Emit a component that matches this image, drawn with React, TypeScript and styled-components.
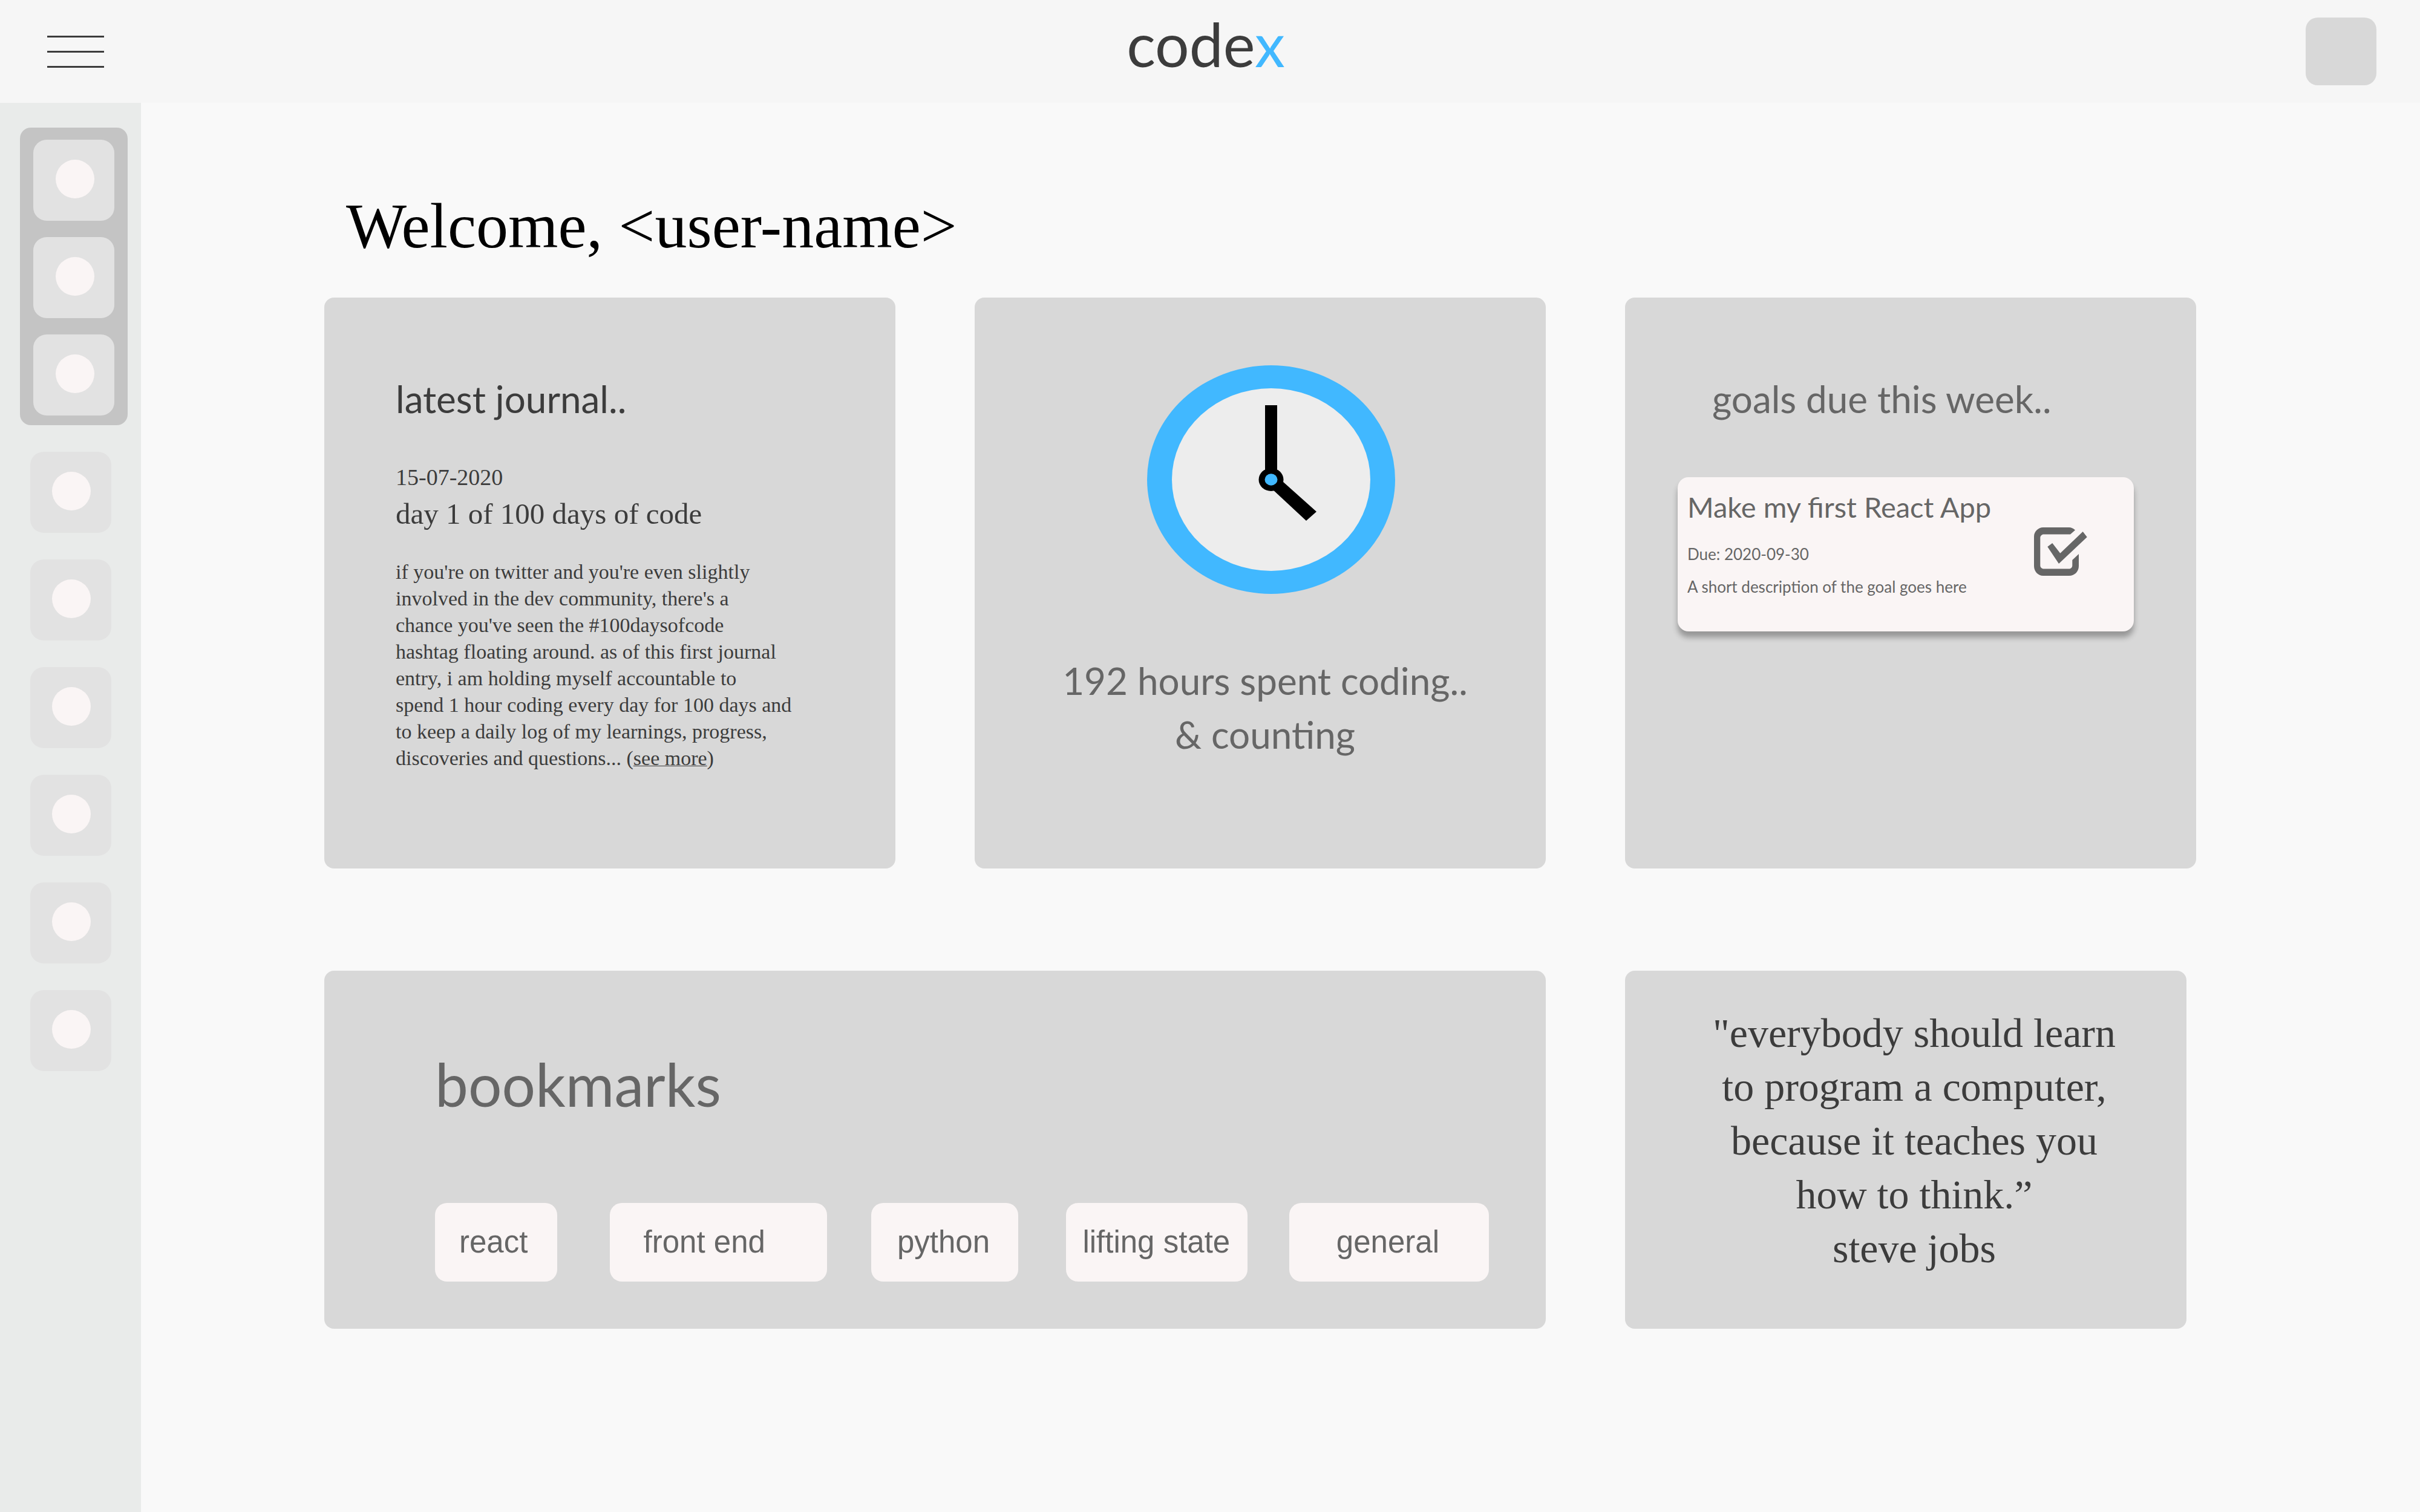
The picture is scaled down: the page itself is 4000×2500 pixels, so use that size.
import React from "react";
import styled, { createGlobalStyle } from "styled-components";

const sans = `Lato, "Open Sans", sans-serif`;
const serif = `"Liberation Serif", "Times New Roman", serif`;
const plain = `"Liberation Sans", Arial, sans-serif`;

const color = {
  page: "#f9f9f9",
  header: "#f6f6f6",
  sidebar: "#e9ebea",
  group: "#c4c4c4",
  tile: "#e2e2e2",
  blush: "#faf5f5",
  card: "#d8d8d8",
  ink: "#3c3c3c",
  muted: "#666666",
  accent: "#41b8ff",
};

const GlobalStyle = createGlobalStyle`
  *, *::before, *::after { box-sizing: border-box; }
  body { margin: 0; background: ${color.page}; color: ${color.ink}; font-family: ${sans}; }
  h1, h2, h3, p, ul, blockquote { margin: 0; padding: 0; font-weight: 400; }
  button { border: 0; padding: 0; background: none; font: inherit; color: inherit; cursor: pointer; }
`;

const Page = styled.div`
  display: flex;
  flex-direction: column;
  min-height: 100vh;
`;

const Header = styled.header`
  display: grid;
  grid-template-columns: 1fr auto 1fr;
  align-items: center;
  min-height: 170px;
  padding: 0 72px 0 58px;
  background: ${color.header};
`;

const MenuButton = styled.button`
  display: flex;
  flex-direction: column;
  gap: 22px;
  justify-self: start;
  padding: 20px;
`;

const MenuLine = styled.span`
  width: 94px;
  height: 3px;
  background: ${color.ink};
`;

const Logo = styled.a`
  align-self: start;
  font-size: 100px;
  line-height: 144px;
  color: ${color.ink};
  text-decoration: none;
`;

const LogoAccent = styled.span`
  color: ${color.accent};
`;

const Avatar = styled.button`
  justify-self: end;
  width: 117px;
  height: 112px;
  border-radius: 20px;
  background: ${color.card};
`;

const Body = styled.div`
  display: flex;
  flex: 1;
`;

const Sidebar = styled.nav`
  display: flex;
  flex-direction: column;
  align-items: center;
  gap: 44px;
  flex: 0 0 233px;
  padding: 41px 0;
  background: ${color.sidebar};
`;

const PinnedGroup = styled.div`
  display: flex;
  flex-direction: column;
  gap: 27px;
  margin-left: 11px;
  padding: 20px 22px 16px;
  border-radius: 18px;
  background: ${color.group};
`;

const Tile = styled.button`
  display: grid;
  place-items: center;
  width: 134px;
  height: 134px;
  padding: 0 0 4px 3px;
  border-radius: 22px;
  background: ${color.tile};
`;

const Dot = styled.span`
  width: 64px;
  height: 64px;
  border-radius: 50%;
  background: ${color.blush};
`;

const Main = styled.main`
  flex: 1;
  min-width: 0;
  padding: 134px 370px 160px 303px;
`;

const Welcome = styled.h1`
  margin-bottom: 48px;
  padding-left: 36px;
  font-family: ${serif};
  font-size: 106px;
  line-height: 140px;
  color: #000;
`;

const CardGrid = styled.div`
  display: grid;
  grid-template-columns: repeat(3, minmax(0, 1fr));
  column-gap: 131px;
  row-gap: 169px;
`;

const Card = styled.section`
  border-radius: 16px;
  background: ${color.card};
`;

const SquareCard = styled(Card)`
  aspect-ratio: 1;
`;

const CardHeading = styled.h2`
  font-size: 62px;
  line-height: 88px;
`;

const JournalCard = styled(SquareCard)`
  padding: 123px 118px;
`;

const EntryDate = styled.p`
  margin-top: 64px;
  font-family: ${serif};
  font-size: 38px;
  line-height: 44px;
`;

const EntryTitle = styled.h3`
  margin-top: 9px;
  font-family: ${serif};
  font-size: 49px;
  line-height: 60px;
`;

const EntryText = styled.p`
  margin-top: 44px;
  font-family: ${serif};
  font-size: 34px;
  line-height: 44px;
  white-space: nowrap;
`;

const MoreLink = styled.a`
  color: inherit;
  text-decoration: underline;
  text-decoration-thickness: 1px;
`;

const HoursCard = styled(SquareCard)`
  display: flex;
  flex-direction: column;
  align-items: center;
  padding: 112px 0 0 16px;
  color: ${color.muted};
`;

const Clock = styled.svg`
  display: block;
  margin-left: 20px;
`;

const HoursText = styled.p`
  margin-top: 99px;
  font-size: 62px;
  line-height: 89px;
  text-align: center;
`;

const GoalsCard = styled(SquareCard)`
  padding: 123px 103px 0 87px;
  color: ${color.muted};
`;

const GoalsHeading = styled(CardHeading)`
  padding-left: 57px;
`;

const Goal = styled.article`
  display: flex;
  justify-content: space-between;
  margin-top: 86px;
  padding: 19px 77px 57px 16px;
  border-radius: 18px;
  background: ${color.blush};
  box-shadow: 0 10px 10px rgba(0, 0, 0, 0.3);
`;

const GoalTitle = styled.h3`
  font-size: 47px;
  line-height: 60px;
`;

const GoalDue = styled.p`
  margin-top: 31px;
  font-size: 26px;
  line-height: 34px;
`;

const GoalNote = styled.p`
  margin-top: 20px;
  font-size: 26px;
  line-height: 34px;
`;

const GoalCheck = styled.label`
  position: relative;
  align-self: flex-start;
  margin-top: 64px;
  cursor: pointer;

  svg { display: block; }
`;

const CheckInput = styled.input`
  position: absolute;
  inset: 0;
  width: 100%;
  height: 100%;
  margin: 0;
  opacity: 0;
  cursor: pointer;

  &:not(:checked) + svg .tick { visibility: hidden; }
`;

const BookmarksCard = styled(Card)`
  grid-column: span 2;
  min-height: 592px;
  padding: 127px 94px 78px 183px;
  color: ${color.muted};
`;

const BookmarksHeading = styled.h2`
  font-size: 98px;
  line-height: 120px;
`;

const ChipRow = styled.ul`
  display: grid;
  grid-template-columns: 289fr 433fr 323fr 369fr 329fr;
  margin-top: 137px;
  list-style: none;
`;

const Chip = styled.button<{ $before: number; $after: number }>`
  padding: 0 ${(p) => p.$after}px 0 ${(p) => p.$before}px;
  border-radius: 20px;
  background: ${color.blush};
  font-family: ${plain};
  font-size: 51px;
  line-height: 130px;
  white-space: nowrap;
`;

const QuoteCard = styled(Card)`
  margin-right: 16px;
  padding: 59px 0 0 28px;
  font-family: ${serif};
  font-size: 68px;
  line-height: 89px;
  text-align: center;
`;

const bookmarks = [
  { name: "react", before: 40, after: 49 },
  { name: "front end", before: 56, after: 102 },
  { name: "python", before: 43, after: 47 },
  { name: "lifting state", before: 27, after: 29 },
  { name: "general", before: 78, after: 82 },
];

const pinned = ["Home", "Journal", "Goals"];
const places = ["Bookmarks", "Projects", "Notes", "Stats", "Friends", "Settings"];

function ClockFace() {
  return (
    <Clock width="410" height="378" viewBox="0 0 410 378" aria-hidden="true">
      <ellipse cx="205" cy="189" rx="205" ry="189" fill={color.accent} />
      <ellipse cx="205" cy="189" rx="164" ry="151" fill="#ededed" />
      <rect x="195" y="66" width="20" height="123" />
      <polygon points="205,175 280,242 263,257 191,190" />
      <ellipse cx="205" cy="189" rx="20.5" ry="19" />
      <ellipse cx="205" cy="189" rx="10.5" ry="9.7" fill={color.accent} />
    </Clock>
  );
}

function CheckIcon() {
  return (
    <svg width="88" height="80" viewBox="0 0 88 80" fill={color.muted} aria-hidden="true">
      <path d="M68 4.5C65 1.500 61.500 0 58 0H15C7 0 0 7 0 15V64C0 73 7 80 15 80H58C67 80 74 73 74 64V44L63.300 54V63C63.300 66 61 68.500 58 68.500H16C13 68.500 10.300 66 10.300 63V17C10.300 14 13 11.500 16 11.500H60Z" />
      <polygon className="tick" points="22.300,32 30.300,26 43.300,42.700 80.700,7 87.700,16 41,60" />
    </svg>
  );
}

export default function App() {
  return (
    <Page>
      <GlobalStyle />
      <Header>
        <MenuButton type="button" aria-label="Menu">
          <MenuLine />
          <MenuLine />
          <MenuLine />
        </MenuButton>
        <Logo href="#">
          code<LogoAccent>x</LogoAccent>
        </Logo>
        <Avatar type="button" aria-label="Account" />
      </Header>
      <Body>
        <Sidebar>
          <PinnedGroup>
            {pinned.map((name) => (
              <Tile key={name} type="button" aria-label={name}>
                <Dot />
              </Tile>
            ))}
          </PinnedGroup>
          {places.map((name) => (
            <Tile key={name} type="button" aria-label={name}>
              <Dot />
            </Tile>
          ))}
        </Sidebar>
        <Main>
          <Welcome>Welcome, &lt;user-name&gt;</Welcome>
          <CardGrid>
            <JournalCard>
              <CardHeading>latest journal..</CardHeading>
              <EntryDate>15-07-2020</EntryDate>
              <EntryTitle>day 1 of 100 days of code</EntryTitle>
              <EntryText>
                if you're on twitter and you're even slightly
                <br />
                involved in the dev community, there's a
                <br />
                chance you've seen the #100daysofcode
                <br />
                hashtag floating around. as of this first journal
                <br />
                entry, i am holding myself accountable to
                <br />
                spend 1 hour coding every day for 100 days and
                <br />
                to keep a daily log of my learnings, progress,
                <br />
                discoveries and questions... (<MoreLink href="#">see more</MoreLink>)
              </EntryText>
            </JournalCard>
            <HoursCard>
              <ClockFace />
              <HoursText>
                192 hours spent coding..
                <br />
                &amp; counting
              </HoursText>
            </HoursCard>
            <GoalsCard>
              <GoalsHeading>goals due this week..</GoalsHeading>
              <Goal>
                <div>
                  <GoalTitle>Make my first React App</GoalTitle>
                  <GoalDue>Due: 2020-09-30</GoalDue>
                  <GoalNote>A short description of the goal goes here</GoalNote>
                </div>
                <GoalCheck>
                  <CheckInput type="checkbox" defaultChecked aria-label="Make my first React App" />
                  <CheckIcon />
                </GoalCheck>
              </Goal>
            </GoalsCard>
            <BookmarksCard>
              <BookmarksHeading>bookmarks</BookmarksHeading>
              <ChipRow>
                {bookmarks.map((b) => (
                  <li key={b.name}>
                    <Chip type="button" $before={b.before} $after={b.after}>
                      {b.name}
                    </Chip>
                  </li>
                ))}
              </ChipRow>
            </BookmarksCard>
            <QuoteCard as="blockquote">
              "everybody should learn
              <br />
              to program a computer,
              <br />
              because it teaches you
              <br />
              how to think.”
              <br />
              steve jobs
            </QuoteCard>
          </CardGrid>
        </Main>
      </Body>
    </Page>
  );
}
